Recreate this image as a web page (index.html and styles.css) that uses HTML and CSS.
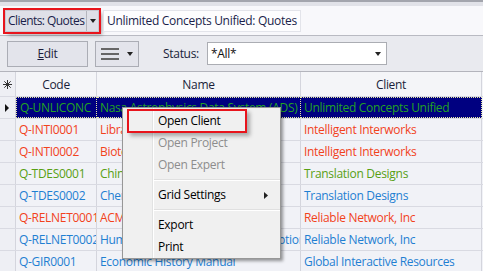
FILE: index.html
```html
<!DOCTYPE html>
<html lang="en">

<head>
    <meta charset="UTF-8">
    <title>Clients: Quotes</title>
    <link rel="stylesheet" href="styles.css">
</head>

<body>
    <div class="topline"></div>

    <div class="tabbar">
        <div class="tab tab-active">
            <span class="tab-label">Clients: Quotes</span>
            <span class="tab-drop"><span class="caret"></span></span>
        </div>
        <div class="tab tab-doc">Unlimited Concepts Unified: Quotes</div>
    </div>

    <div class="toolbar">
        <button class="btn btn-edit"><u>E</u>dit</button>
        <button class="btn btn-menu">
            <svg width="18" height="12" viewBox="0 0 18 12">
                <rect x="0" y="0" width="18" height="2" fill="#666"></rect>
                <rect x="0" y="5" width="18" height="2" fill="#666"></rect>
                <rect x="0" y="10" width="18" height="2" fill="#666"></rect>
            </svg>
            <span class="caret"></span>
        </button>
        <label class="status-label">Status:</label>
        <div class="select">
            <span>*All*</span>
            <span class="caret"></span>
        </div>
    </div>

    <div class="grid">
        <div class="row head">
            <div class="cell c0">
                <svg width="9" height="9" viewBox="0 0 9 9">
                    <path d="M4.5 0v9M0 4.5h9M1.3 1.3l6.4 6.4M7.7 1.3l-6.4 6.4" stroke="#333" stroke-width="1"></path>
                </svg>
            </div>
            <div class="cell c1 center">Code</div>
            <div class="cell c2 center">Name</div>
            <div class="cell c3 center">Client</div>
        </div>
        <div class="row selected">
            <div class="cell c0">
                <svg width="5" height="8" viewBox="0 0 5 8"><path d="M0 0l4 4-4 4z" fill="#111"></path></svg>
            </div>
            <div class="cell c1">Q-UNLICONC</div>
            <div class="cell c2">Nasa Astrophysics Data System (ADS) Archive</div>
            <div class="cell c3">Unlimited Concepts Unified</div>
        </div>
        <div class="row red">
            <div class="cell c0"></div>
            <div class="cell c1">Q-INTI0001</div>
            <div class="cell c2">Library Services Rollout</div>
            <div class="cell c3">Intelligent Interworks</div>
        </div>
        <div class="row red">
            <div class="cell c0"></div>
            <div class="cell c1">Q-INTI0002</div>
            <div class="cell c2">Biotech Assay Review - Prototype</div>
            <div class="cell c3">Intelligent Interworks</div>
        </div>
        <div class="row green">
            <div class="cell c0"></div>
            <div class="cell c1">Q-TDES0001</div>
            <div class="cell c2">Chinese Manual Translation</div>
            <div class="cell c3">Translation Designs</div>
        </div>
        <div class="row blue">
            <div class="cell c0"></div>
            <div class="cell c1">Q-TDES0002</div>
            <div class="cell c2">Chemistry Glossary Update</div>
            <div class="cell c3">Translation Designs</div>
        </div>
        <div class="row red">
            <div class="cell c0"></div>
            <div class="cell c1">Q-RELNET0001</div>
            <div class="cell c2">ACM Network Audit</div>
            <div class="cell c3">Reliable Network, Inc</div>
        </div>
        <div class="row blue">
            <div class="cell c0"></div>
            <div class="cell c1">Q-RELNET0002</div>
            <div class="cell c2">Human Resources Job Title Descriptions</div>
            <div class="cell c3">Reliable Network, Inc</div>
        </div>
        <div class="row blue">
            <div class="cell c0"></div>
            <div class="cell c1">Q-GIR0001</div>
            <div class="cell c2">Economic History Manual</div>
            <div class="cell c3">Global Interactive Resources</div>
        </div>
    </div>

    <!-- context menu over the grid -->
    <div class="ctx-menu">
        <div class="ctx-item marked">Open Client</div>
        <div class="ctx-item disabled">Open Project</div>
        <div class="ctx-item disabled">Open Expert</div>
        <div class="ctx-sep"></div>
        <div class="ctx-item">Grid Settings
            <svg class="sub-arrow" width="4" height="7" viewBox="0 0 4 7"><path d="M0 0l4 3.5-4 3.5z" fill="#222"></path></svg>
        </div>
        <div class="ctx-sep"></div>
        <div class="ctx-item">Export</div>
        <div class="ctx-item">Print</div>
    </div>
</body>

</html>
```

FILE: styles.css
```css
html,
body {
    margin: 0;
    width: 483px;
    height: 271px;
    overflow: hidden;
}

body {
    font-family: "Open Sans", "Noto Sans", sans-serif;
    font-size: 12px;
    letter-spacing: -0.3px;
    color: #1e1e3c;
    background-color: #eef0f4;
    position: relative;
}

.topline {
    height: 2px;
    background-color: #a3a5ad;
    border-bottom: 4px solid #e1e2e8;
}

/* tab strip */
.tabbar {
    display: flex;
    gap: 4px;
    align-items: center;
    height: 29px;
    padding-left: 5px;
    background-color: #f8f8fb;
    border-bottom: 1px solid #b9bac2;
}

.tab {
    height: 20px;
    line-height: 20px;
    border: 1px solid #e3e4ea;
    color: #1a1e4a;
}

.tab-active {
    display: flex;
    width: 92px;
    background-color: #dfe0e8;
    border-color: #c8c9d1;
    outline: 2px solid #e8141c;
    box-shadow: 3px 3px 4px rgba(0, 0, 0, 0.35);
}

.tab-label {
    flex: 1;
    padding-left: 2px;
    letter-spacing: -0.55px;
    white-space: nowrap;
    overflow: hidden;
}

.tab-drop {
    width: 11px;
    border-left: 1px solid #b4b5bd;
    display: flex;
    align-items: center;
    justify-content: center;
}

.tab-doc {
    padding: 0 3px;
    background-color: #fdfdfe;
}

.caret {
    width: 0;
    height: 0;
    border-left: 3px solid transparent;
    border-right: 3px solid transparent;
    border-top: 4px solid #222;
}

/* toolbar */
.toolbar {
    display: flex;
    align-items: center;
    height: 35px;
    padding-left: 7px;
    background-color: #e9eaef;
}

.btn {
    height: 26px;
    margin: 0;
    padding: 0;
    font: inherit;
    letter-spacing: inherit;
    color: #1e1e3c;
    background-color: #e3e4eb;
    border: 1px solid #abadb5;
}

.btn-edit {
    width: 81px;
}

.btn-menu {
    width: 44px;
    margin-left: 7px;
    display: flex;
    align-items: center;
    justify-content: center;
    gap: 8px;
}

.status-label {
    margin-left: 24px;
    color: #1a1e3a;
}

.select {
    display: flex;
    align-items: center;
    justify-content: space-between;
    width: 170px;
    height: 21px;
    margin-left: 8px;
    padding: 0 5px 0 3px;
    background-color: #fff;
    border: 1px solid #abadb3;
    color: #111;
}

/* grid */
.grid {
    border-top: 1px solid #b3b4bc;
    background-color: #f1f2f7;
}

.row {
    display: flex;
    height: 21px;
    border-bottom: 1px solid #d9dae2;
}

.row.head {
    height: 24px;
    background-color: #f4f5f8;
    color: #1a1e3a;
}

.cell {
    display: flex;
    align-items: center;
    padding-left: 3px;
    border-right: 1px solid #d4d5dd;
    white-space: nowrap;
    overflow: hidden;
    box-sizing: border-box;
}

.center {
    justify-content: center;
    padding-left: 0;
}

.c0 {
    width: 16px;
    padding-left: 0;
    justify-content: center;
    background-color: #eeeff4;
}

.c1 {
    width: 81px;
}

.c2 {
    width: 204px;
}

.c3 {
    width: 181px;
}

.red {
    color: #f2421c;
}

.green {
    color: #58a014;
}

.blue {
    color: #1f7fd2;
}

.selected .c1,
.selected .c2,
.selected .c3 {
    background-color: #000080;
    color: #22a322;
    border: 1px dotted #e8e8a0;
    border-left: none;
}

.selected .c1 {
    border-left: 1px dotted #e8e8a0;
}

/* context menu */
.ctx-menu {
    position: absolute;
    left: 122px;
    top: 107px;
    width: 157px;
    padding: 2px 0 0 0;
    background-color: #f0f0f0;
    border: 1px solid #979797;
    box-shadow: 2px 2px 3px rgba(0, 0, 0, 0.4);
    background-image: linear-gradient(to right, transparent 29px, #e2e3e3 29px, #e2e3e3 30px, #fff 30px, #fff 31px, transparent 31px);
    color: #000;
}

.ctx-item {
    position: relative;
    height: 22px;
    line-height: 22px;
    padding-left: 35px;
}

.ctx-item.disabled {
    color: #8d8d8d;
}

.ctx-item.marked::after {
    content: "";
    position: absolute;
    left: 4px;
    top: -1px;
    width: 116px;
    height: 20px;
    border: 2px solid #e8141c;
    box-shadow: 3px 3px 4px rgba(0, 0, 0, 0.3);
}

.sub-arrow {
    position: absolute;
    right: 12px;
    top: 8px;
}

.ctx-sep {
    height: 8px;
    margin-left: 31px;
    background: linear-gradient(#e0e0e0, #e0e0e0) 0 3px / 100% 1px no-repeat,
        linear-gradient(#fff, #fff) 0 4px / 100% 1px no-repeat;
}
```
